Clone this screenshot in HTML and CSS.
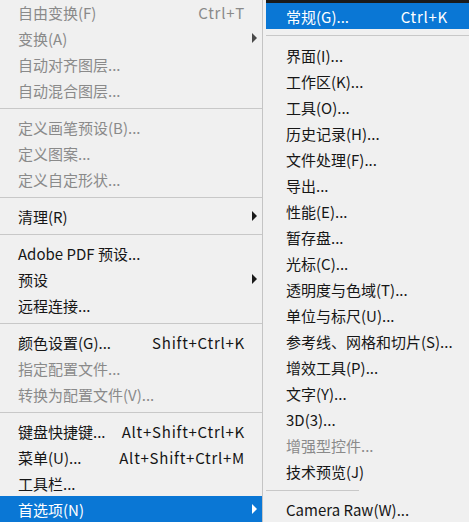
FILE: index.html
```html
<!DOCTYPE html>
<html lang="zh-CN">
<head>
  <meta charset="UTF-8">
  <title>编辑菜单 - 首选项</title>
  <link rel="stylesheet" href="styles.css">
</head>
<body>

  <div class="screen">
    <div class="menu main">
      <div class="item off"><span class="label">自由变换(F)</span><span class="key">Ctrl+T</span><span class="more"></span></div>
      <div class="item off"><span class="label">变换(A)</span><span class="more"><i class="arrow"></i></span></div>
      <div class="item off"><span class="label">自动对齐图层...</span><span class="more"></span></div>
      <div class="item off"><span class="label">自动混合图层...</span><span class="more"></span></div>
      <div class="sep"></div>
      <div class="item off"><span class="label">定义画笔预设(B)...</span><span class="more"></span></div>
      <div class="item off"><span class="label">定义图案...</span><span class="more"></span></div>
      <div class="item off"><span class="label">定义自定形状...</span><span class="more"></span></div>
      <div class="sep"></div>
      <div class="item"><span class="label">清理(R)</span><span class="more"><i class="arrow"></i></span></div>
      <div class="sep"></div>
      <div class="item"><span class="label">Adobe PDF 预设...</span><span class="more"></span></div>
      <div class="item"><span class="label">预设</span><span class="more"><i class="arrow"></i></span></div>
      <div class="item"><span class="label">远程连接...</span><span class="more"></span></div>
      <div class="sep"></div>
      <div class="item"><span class="label">颜色设置(G)...</span><span class="key">Shift+Ctrl+K</span><span class="more"></span></div>
      <div class="item off"><span class="label">指定配置文件...</span><span class="more"></span></div>
      <div class="item off"><span class="label">转换为配置文件(V)...</span><span class="more"></span></div>
      <div class="sep"></div>
      <div class="item"><span class="label">键盘快捷键...</span><span class="key">Alt+Shift+Ctrl+K</span><span class="more"></span></div>
      <div class="item"><span class="label">菜单(U)...</span><span class="key">Alt+Shift+Ctrl+M</span><span class="more"></span></div>
      <div class="item"><span class="label">工具栏...</span><span class="more"></span></div>
      <div class="item active"><span class="label">首选项(N)</span><span class="more"><i class="arrow"></i></span></div>
    </div>

    <div class="menu sub">
      <div class="topband"></div>
      <div class="item active"><span class="label">常规(G)...</span><span class="key">Ctrl+K</span></div>
      <div class="sep"></div>
      <div class="item"><span class="label">界面(I)...</span></div>
      <div class="item"><span class="label">工作区(K)...</span></div>
      <div class="item"><span class="label">工具(O)...</span></div>
      <div class="item"><span class="label">历史记录(H)...</span></div>
      <div class="item"><span class="label">文件处理(F)...</span></div>
      <div class="item"><span class="label">导出...</span></div>
      <div class="item"><span class="label">性能(E)...</span></div>
      <div class="item"><span class="label">暂存盘...</span></div>
      <div class="item"><span class="label">光标(C)...</span></div>
      <div class="item"><span class="label">透明度与色域(T)...</span></div>
      <div class="item"><span class="label">单位与标尺(U)...</span></div>
      <div class="item"><span class="label">参考线、网格和切片(S)...</span></div>
      <div class="item"><span class="label">增效工具(P)...</span></div>
      <div class="item"><span class="label">文字(Y)...</span></div>
      <div class="item"><span class="label">3D(3)...</span></div>
      <div class="item off"><span class="label">增强型控件...</span></div>
      <div class="item"><span class="label">技术预览(J)</span></div>
      <div class="sep short"></div>
      <div class="item"><span class="label">Camera Raw(W)...</span></div>
    </div>
  </div>

</body>
</html>
```

FILE: styles.css
```css
body {
  margin: 0;
  background-color: #f0f0f0;
  font-family: "Noto Sans CJK SC", "Noto Sans", sans-serif;
  font-size: 15px;
  color: #161616;
}
.screen {
  display: flex;
  height: 522px;
  overflow: hidden;
}
.menu {
  display: flex;
  flex-direction: column;
}
.main {
  width: 262px;
  flex-shrink: 0;
  margin-top: -1px;
}
.sub {
  flex: 1;
  min-width: 0;
  border-left: 1px solid #c4c4c4;
  padding-left: 3px;
}
.topband {
  height: 3px;
  background-color: #1a1a1a;
}
.item {
  display: flex;
  align-items: center;
  height: 26px;
  flex-shrink: 0;
  white-space: nowrap;
}
.main .item {
  padding: 0 5px 0 18px;
}
.sub .item {
  padding: 0 21px 0 20px;
}
.label {
  flex: 1;
}
.key {
  letter-spacing: 0.75px;
}
.more {
  width: 12px;
  display: flex;
  justify-content: flex-end;
}
.arrow {
  width: 0;
  height: 0;
  border-left: 5px solid #1a1a1a;
  border-top: 5px solid transparent;
  border-bottom: 5px solid transparent;
}
.off {
  color: #8a8a8a;
}
.off .arrow {
  border-left-color: #4a4a4a;
}
.active {
  background-color: #0a77d5;
  color: #fff;
}
.active .arrow {
  border-left-color: #fff;
}
.sep {
  height: 11px;
  flex-shrink: 0;
  display: flex;
  align-items: center;
}
.sep::after {
  content: "";
  flex: 1;
  height: 1px;
  background-color: #c8c8c8;
}
.sub .sep {
  height: 12px;
}
.sub .sep:nth-child(3) {
  height: 13px;
}
.sep.short::after {
  flex: none;
  width: 93px;
}
```
